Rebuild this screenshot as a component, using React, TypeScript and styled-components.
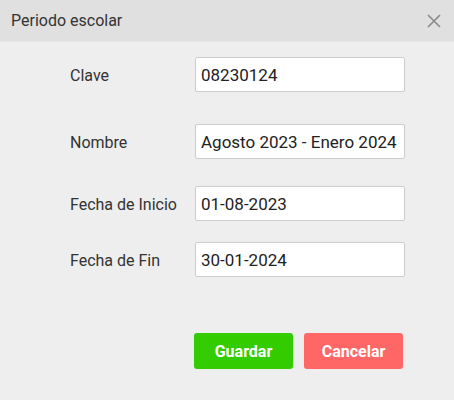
import React from "react";
import { styled, createGlobalStyle } from "styled-components";

const GlobalStyle = createGlobalStyle`
  html, body {
    margin: 0;
    padding: 0;
    background: #eeeeee;
    font-family: Roboto, "Liberation Sans", sans-serif;
  }
`;

const fields = [
  { label: "Clave", value: "08230124", gap: 0 },
  { label: "Nombre", value: "Agosto 2023 - Enero 2024", gap: 32 },
  { label: "Fecha de Inicio", value: "01-08-2023", gap: 27 },
  { label: "Fecha de Fin", value: "30-01-2024", gap: 21 },
];

export default function App() {
  return (
    <>
      <GlobalStyle />
      <Dialog>
        <Header>
          <Title>Periodo escolar</Title>
          <CloseButton aria-label="Cerrar">
            <svg width="14" height="14" viewBox="0 0 14 14">
              <path d="M1 1 L13 13 M13 1 L1 13" stroke="#8a8a8a" strokeWidth="1.6" fill="none" />
            </svg>
          </CloseButton>
        </Header>
        <Body>
          {fields.map((f) => (
            <Row key={f.label} $gap={f.gap}>
              <Label>{f.label}</Label>
              <Input defaultValue={f.value} />
            </Row>
          ))}
          <Actions>
            <Button $color="#33cc00">Guardar</Button>
            <Button $color="#ff6666">Cancelar</Button>
          </Actions>
        </Body>
      </Dialog>
    </>
  );
}

const Dialog = styled.div`
  width: 454px;
  height: 400px;
  background: #eeeeee;
  display: flex;
  flex-direction: column;
`;

const Header = styled.div`
  height: 42px;
  background: #e0e0e0;
  border-bottom: 1px solid #e6e6e6;
  display: flex;
  align-items: center;
  justify-content: space-between;
  padding: 0 13px 0 11px;
  box-sizing: border-box;
`;

const Title = styled.div`
  font-size: 16px;
  color: #333333;
`;

const CloseButton = styled.button`
  border: none;
  background: none;
  padding: 0;
  display: flex;
  cursor: pointer;
`;

const Body = styled.div`
  padding: 15px 0 0 70px;
  display: flex;
  flex-direction: column;
`;

const Row = styled.div<{ $gap: number }>`
  display: flex;
  align-items: center;
  margin-top: ${(p) => p.$gap}px;
`;

const Label = styled.label`
  width: 125px;
  font-size: 16px;
  color: #333333;
  padding-top: 2px;
`;

const Input = styled.input`
  width: 210px;
  height: 35px;
  box-sizing: border-box;
  border: 1px solid #cccccc;
  border-radius: 2px;
  background: #ffffff;
  padding: 0 5px;
  font-family: Roboto, "Liberation Sans", sans-serif;
  font-size: 17px;
  color: #222222;
  outline: none;
`;

const Actions = styled.div`
  display: flex;
  gap: 11px;
  margin-top: 56px;
  padding-left: 124px;
`;

const Button = styled.button<{ $color: string }>`
  width: 99px;
  height: 36px;
  border: none;
  border-radius: 3px;
  background: ${(p) => p.$color};
  color: #ffffff;
  font-family: Roboto, "Liberation Sans", sans-serif;
  font-weight: bold;
  font-size: 16px;
  cursor: pointer;
`;
